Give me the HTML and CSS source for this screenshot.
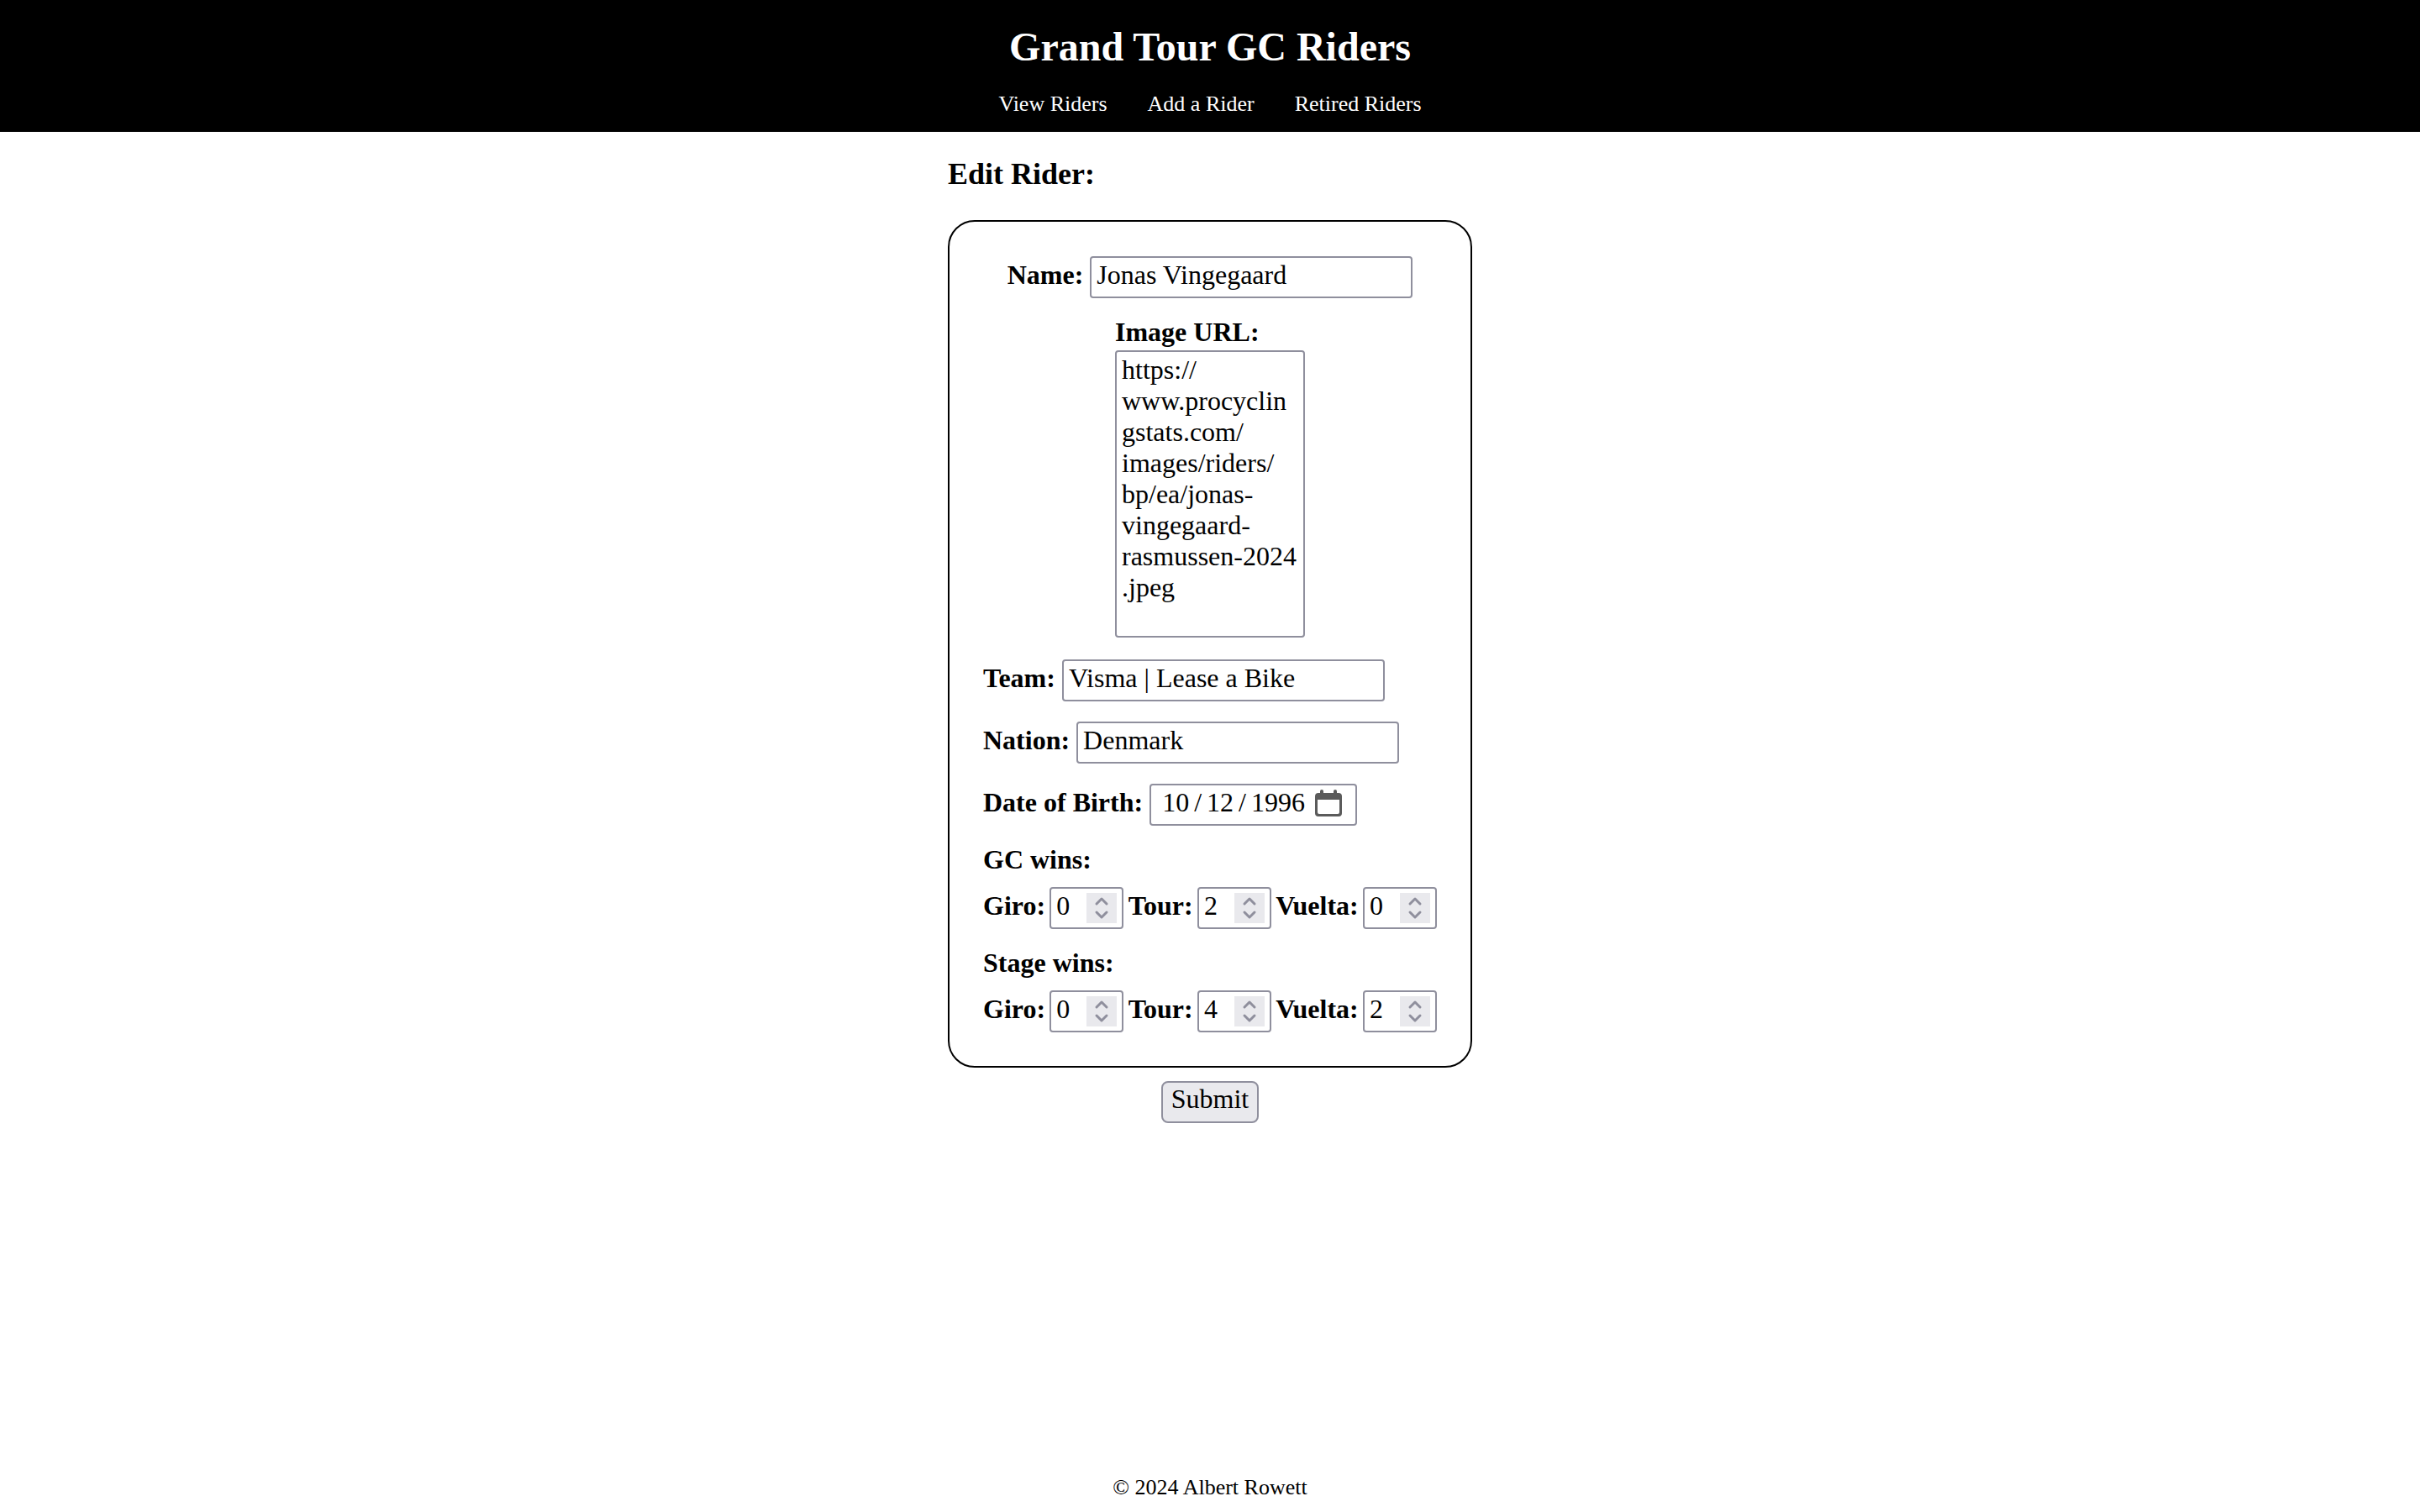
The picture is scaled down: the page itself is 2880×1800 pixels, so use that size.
FILE: index.html
```html
<!DOCTYPE html>
<html lang="en-US">
<head>
<meta charset="utf-8">
<meta name="viewport" content="width=device-width, initial-scale=1">
<title>Grand Tour GC Riders</title>
<link rel="stylesheet" href="styles.css">
</head>
<body>
<header class="site-header">
  <h1 class="site-title">Grand Tour GC Riders</h1>
  <nav class="site-nav">
    <a href="#riders">View Riders</a>
    <a href="#add">Add a Rider</a>
    <a href="#retired">Retired Riders</a>
  </nav>
</header>
<main class="editor">
  <h2 class="editor-title">Edit Rider:</h2>
  <form class="rider-form">
    <div class="card">
      <div class="field field-centered">
        <label for="name">Name:</label>
        <input class="control text-control" type="text" id="name" value="Jonas Vingegaard">
      </div>
      <div class="field-stack">
        <label class="heading" for="image">Image URL:</label>
        <textarea class="control url-control" id="image" spellcheck="false">https://
www.procyclin
gstats.com/
images/riders/
bp/ea/jonas-
vingegaard-
rasmussen-2024
.jpeg</textarea>
      </div>
      <div class="field">
        <label for="team">Team:</label>
        <input class="control text-control" type="text" id="team" value="Visma | Lease a Bike">
      </div>
      <div class="field">
        <label for="nation">Nation:</label>
        <input class="control text-control" type="text" id="nation" value="Denmark">
      </div>
      <div class="field">
        <label for="dob">Date of Birth:</label>
        <input class="control date-control" type="date" id="dob" value="1996-10-12">
      </div>
      <div class="wins" role="group" aria-labelledby="gc-heading">
        <div class="heading" id="gc-heading">GC wins:</div>
        <div class="wins-row">
          <label for="gc-giro">Giro:</label>
          <input class="control number-control" type="number" min="0" id="gc-giro" value="0">
          <label for="gc-tour">Tour:</label>
          <input class="control number-control" type="number" min="0" id="gc-tour" value="2">
          <label for="gc-vuelta">Vuelta:</label>
          <input class="control number-control" type="number" min="0" id="gc-vuelta" value="0">
        </div>
      </div>
      <div class="wins" role="group" aria-labelledby="stage-heading">
        <div class="heading" id="stage-heading">Stage wins:</div>
        <div class="wins-row">
          <label for="stage-giro">Giro:</label>
          <input class="control number-control" type="number" min="0" id="stage-giro" value="0">
          <label for="stage-tour">Tour:</label>
          <input class="control number-control" type="number" min="0" id="stage-tour" value="4">
          <label for="stage-vuelta">Vuelta:</label>
          <input class="control number-control" type="number" min="0" id="stage-vuelta" value="2">
        </div>
      </div>
    </div>
    <button class="submit" type="submit">Submit</button>
  </form>
</main>
<footer class="site-footer">© 2024 Albert Rowett</footer>
</body>
</html>
```
FILE: styles.css
```css
* {
  box-sizing: border-box;
}

body {
  display: flex;
  flex-direction: column;
  min-height: 100vh;
  margin: 0;
  background: #fff;
  color: #000;
  font-family: "Liberation Serif", "Times New Roman", serif;
  font-size: 32px;
  line-height: 37px;
}

.site-header {
  display: flex;
  flex-direction: column;
  align-items: center;
  gap: 25px;
  padding: 28px 16px 18px;
  background: #000;
  color: #fff;
}

.site-title {
  margin: 0;
  font-size: 48px;
  line-height: 56px;
}

.site-nav {
  display: flex;
  gap: 48px;
  font-size: 26px;
  line-height: 30px;
}

.site-nav a {
  color: #fff;
  text-decoration: none;
}

.editor {
  flex: 1;
  align-self: center;
  min-width: 624px;
  padding: 29px 0;
}

.editor-title {
  margin: 0 0 34px;
  font-size: 36px;
  line-height: 42px;
}

.rider-form {
  display: flex;
  flex-direction: column;
  align-items: center;
  gap: 16px;
}

.card {
  display: flex;
  flex-direction: column;
  align-self: stretch;
  gap: 24px;
  padding: 41px 40px 40px;
  border: 2px solid #000;
  border-radius: 32px;
}

.field {
  display: flex;
  align-items: baseline;
  gap: 8px;
}

.field-centered {
  justify-content: center;
}

.field-stack {
  display: flex;
  flex-direction: column;
  align-self: center;
  gap: 6px;
  padding-bottom: 2px;
}

.wins {
  display: flex;
  flex-direction: column;
  gap: 17px;
}

.wins-row {
  display: flex;
  align-items: baseline;
  justify-content: space-between;
  gap: 5px;
}

label,
.heading {
  font-weight: bold;
}

.heading {
  line-height: 32px;
}

.control {
  height: 50px;
  margin: 0;
  padding: 2px 6px 7px;
  border: 2px solid #8f8f9d;
  border-radius: 4px;
  background: #fff;
  color: #000;
  font: inherit;
}

.text-control {
  width: 384px;
}

.url-control {
  width: 226px;
  height: 342px;
  padding: 3px 6px;
  overflow: hidden;
  resize: none;
  white-space: pre;
}

.date-control {
  width: 247px;
  padding: 2px 16px 7px 12px;
}

.date-control::-webkit-datetime-edit-text {
  padding: 0 5px;
}

.date-control::-webkit-calendar-picker-indicator {
  width: 32px;
  height: 34px;
  margin: 0;
  padding: 0;
  opacity: 1;
  background: url("data:image/svg+xml,%3Csvg xmlns='http://www.w3.org/2000/svg' viewBox='0 0 32 34'%3E%3Cpath fill='%235b5b5b' fill-rule='evenodd' d='M6 5V3q0-2 2-2t2 2v2h12V3q0-2 2-2t2 2v2h2q4 0 4 4v20q0 4-4 4H4q-4 0-4-4V9q0-4 4-4zM3 13v15q0 2 2 2h22q2 0 2-2V13z'/%3E%3C/svg%3E") center / 32px 34px no-repeat;
}

.number-control {
  width: 88px;
}

.number-control::-webkit-inner-spin-button {
  width: 36px;
  height: 36px;
  margin: 4px 0 0;
  opacity: 1;
  appearance: none;
  background: #e9e9ed url("data:image/svg+xml,%3Csvg xmlns='http://www.w3.org/2000/svg' viewBox='0 0 36 36'%3E%3Cpath fill='none' stroke='%238f8f9d' stroke-width='3' stroke-linecap='round' stroke-linejoin='round' d='M12 13l6-6 6 6M12 23l6 6 6-6'/%3E%3C/svg%3E") center / 36px 36px no-repeat;
}

.submit {
  height: 50px;
  padding: 1px 10px 8px;
  border: 2px solid #8f8f9d;
  border-radius: 8px;
  background: #e9e9ed;
  color: #000;
  font: inherit;
}

.site-footer {
  padding: 16px 16px 14px;
  font-size: 26px;
  line-height: 30px;
  text-align: center;
}
```
